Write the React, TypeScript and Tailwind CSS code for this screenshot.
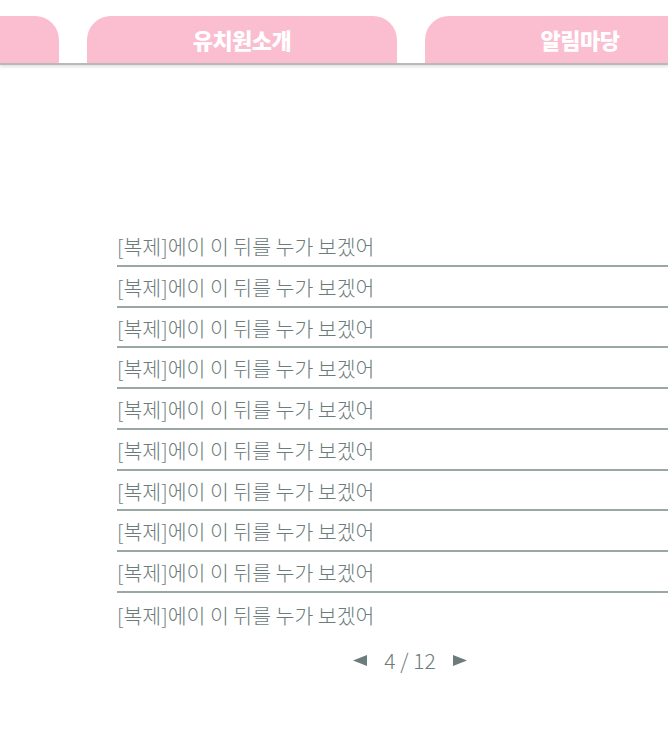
const ROWS = Array.from({ length: 10 }, () => '[복제]에이 이 뒤를 누가 보겠어')

const TABS = [
  { label: '', className: 'ml-[-251px]' },
  { label: '유치원소개', className: '' },
  { label: '알림마당', className: '' },
]

function Arrow({ dir }: { dir: 'left' | 'right' }) {
  return (
    <svg width="14" height="11" viewBox="0 0 14 11" className="fill-[#6c7b7b]">
      {dir === 'left' ? <path d="M0 5.5L14 0v11z" /> : <path d="M14 5.5L0 0v11z" />}
    </svg>
  )
}

export default function App() {
  return (
    <div
      className="relative w-[668px] h-[737px] overflow-hidden bg-white"
      style={{ fontFamily: '"Noto Sans CJK KR", "Noto Sans", sans-serif' }}
    >
      {/* top menu tabs */}
      <div className="pt-[16px]">
        <div className="flex gap-[28px] h-[49px] border-b-[2px] border-[#b9b9b9] shadow-[0_2px_3px_rgba(0,0,0,0.12)]">
          {TABS.map((t, i) => (
            <div
              key={i}
              className={`shrink-0 w-[310px] h-full rounded-t-[24px] bg-[#fbbdd0] flex items-center justify-center text-white text-[22px] font-black tracking-[-0.5px] ${t.className}`}
            >
              {t.label}
            </div>
          ))}
        </div>
      </div>

      {/* board list */}
      <div className="ml-[117px] mt-[161px]">
        {ROWS.map((r, i) => (
          <div
            key={i}
            className={`h-[40.75px] flex items-end pb-[3px] text-[20.5px] font-light text-[#6c7b7b] ${
              i < ROWS.length - 1 ? 'border-b-[2px] border-[#9aa8a4]' : ''
            }`}
          >
            {r}
          </div>
        ))}

        <div className="mt-[11px] pl-[35px] flex justify-center items-center gap-[17px] text-[#6c7b7b]">
          <Arrow dir="left" />
          <span className="text-[21px] font-light">4 / 12</span>
          <Arrow dir="right" />
        </div>
      </div>
    </div>
  )
}
